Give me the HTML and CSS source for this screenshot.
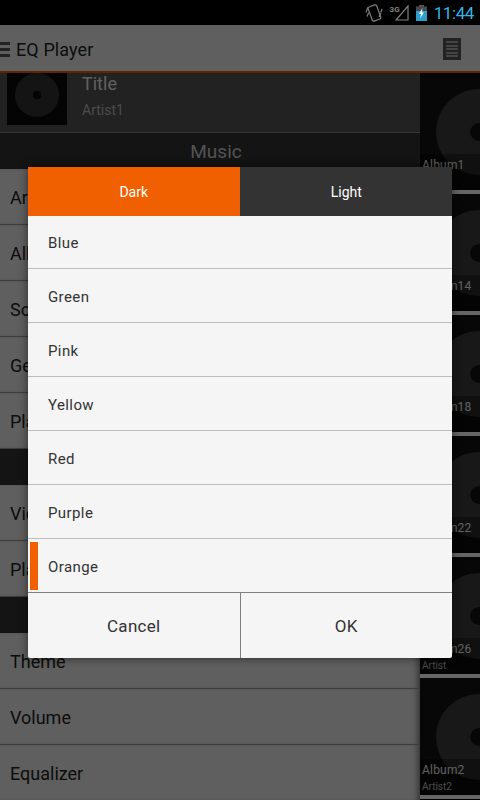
FILE: index.html
```html
<!DOCTYPE html>
<html lang="en">
<head>
    <meta charset="UTF-8" />
    <meta name="viewport" content="width=device-width, initial-scale=1.0"/>
    <title>EQ Player</title>
    <link rel="stylesheet" href="styles.css">
</head>
<body>

<div class="status-bar">
    <svg class="status-rotate" width="18" height="20" viewBox="0 0 18 20" fill="none" stroke="#808080" stroke-width="1.2">
        <rect x="5" y="2.5" width="9" height="15" rx="1.5" transform="rotate(-20 9.5 10)"/>
        <path d="M2.8 4.5 L1 9.5 M3.6 9.5 L2.2 13.5 M15.6 10 L14.2 14 M17 6 L15.8 9.5"/>
    </svg>
    <span class="status-net">
        <span class="status-3g">3G</span>
        <svg width="14" height="16" viewBox="0 0 14 16" fill="none" stroke="#808080" stroke-width="1.2"><path d="M13 1 V15 H1 Z"/></svg>
    </span>
    <svg width="11" height="16" viewBox="0 0 11 16">
        <rect x="3" y="0" width="5" height="2" fill="#555"/>
        <rect x="0" y="1.5" width="11" height="14.5" fill="#4a4a4a"/>
        <rect x="0" y="6" width="11" height="10" fill="#2b9fd0"/>
        <path d="M6.5 3 L3 9 H5.2 L4 13.5 L8 7.5 H5.8 Z" fill="#fff"/>
    </svg>
    <span class="status-time">11:44</span>
</div>

<div class="action-bar">
    <span class="drawer-icon"><i></i><i></i><i></i></span>
    <span class="app-title">EQ Player</span>
    <span class="queue-icon"><i></i><i></i><i></i><i></i><i></i></span>
</div>

<div class="main">
    <div class="menu">
        <div class="now-playing">
            <div class="thumb"><span class="disc"></span></div>
            <div class="track">
                <div class="track-title">Title</div>
                <div class="track-artist">Artist1</div>
            </div>
        </div>
        <div class="section">Music</div>
        <div class="menu-row">Artists</div>
        <div class="menu-row">Albums</div>
        <div class="menu-row">Songs</div>
        <div class="menu-row">Genres</div>
        <div class="menu-row">Playlists</div>
        <div class="section">Video</div>
        <div class="menu-row">Videos</div>
        <div class="menu-row">Playlists</div>
        <div class="section">Settings</div>
        <div class="menu-row">Theme</div>
        <div class="menu-row">Volume</div>
        <div class="menu-row">Equalizer</div>
    </div>

    <div class="albums">
        <div class="album"><span class="album-disc"></span><div class="album-label"><div class="album-name">Album1</div><div class="album-artist">Artist1</div></div></div>
        <div class="album"><span class="album-disc"></span><div class="album-label"><div class="album-name">Album14</div><div class="album-artist">Artist</div></div></div>
        <div class="album"><span class="album-disc"></span><div class="album-label"><div class="album-name">Album18</div><div class="album-artist">Artist</div></div></div>
        <div class="album"><span class="album-disc"></span><div class="album-label"><div class="album-name">Album22</div><div class="album-artist">Artist</div></div></div>
        <div class="album"><span class="album-disc"></span><div class="album-label"><div class="album-name">Album26</div><div class="album-artist">Artist</div></div></div>
        <div class="album"><span class="album-disc"></span><div class="album-label"><div class="album-name">Album2</div><div class="album-artist">Artist2</div></div></div>
    </div>
</div>

<!-- Theme picker, over the dimmed page -->
<div class="dim">
    <div class="dialog">
        <div class="tabs">
            <div class="tab tab-on">Dark</div>
            <div class="tab">Light</div>
        </div>
        <div class="colors">
            <div class="color-row">Blue</div>
            <div class="color-row">Green</div>
            <div class="color-row">Pink</div>
            <div class="color-row">Yellow</div>
            <div class="color-row">Red</div>
            <div class="color-row">Purple</div>
            <div class="color-row selected"><span class="marker"></span><span class="selected-name">Orange</span></div>
        </div>
        <div class="buttons">
            <div class="btn">Cancel</div>
            <div class="btn">OK</div>
        </div>
    </div>
</div>

</body>
</html>
```

FILE: styles.css
```css
* {
    box-sizing: border-box;
}
body {
    margin: 0;
    width: 480px;
    height: 800px;
    overflow: hidden;
    position: relative;
    background: #000;
    font-family: Roboto, "Liberation Sans", sans-serif;
}

/* status bar */
.status-bar {
    height: 25px;
    background: #000;
    display: flex;
    align-items: center;
    justify-content: flex-end;
    gap: 7px;
    padding-right: 6px;
}
.status-net {
    display: flex;
    align-items: flex-end;
}
.status-3g {
    font-size: 8px;
    font-weight: bold;
    color: #808080;
    align-self: flex-start;
    margin-right: -5px;
}
.status-time {
    font-size: 17px;
    color: #33b5e5;
    letter-spacing: -0.4px;
}

/* action bar */
.action-bar {
    height: 48px;
    background: #eee;
    border-bottom: 2px solid #f06000;
    display: flex;
    align-items: center;
    color: #222;
    padding-top: 2px;
}
.drawer-icon {
    width: 10px;
    display: flex;
    flex-direction: column;
    gap: 3px;
}
.drawer-icon i {
    height: 3px;
    background: #555;
}
.app-title {
    font-size: 18px;
    margin-left: 6px;
    letter-spacing: 0.1px;
    padding-top: 1px;
}
.queue-icon {
    margin-left: auto;
    margin-right: 19px;
    width: 18px;
    height: 22px;
    background: #555;
    padding: 3px;
    display: flex;
    flex-direction: column;
    justify-content: space-between;
}
.queue-icon i {
    height: 2px;
    background: #aaa;
}

/* left menu + album strip */
.main {
    display: flex;
    height: 727px;
    overflow: hidden;
}
.menu {
    width: 420px;
    flex-shrink: 0;
    background: #eee;
}
.now-playing {
    height: 60px;
    background: #555;
    border-bottom: 1px solid #888;
    display: flex;
    color: #eee;
    overflow: hidden;
}
.thumb {
    width: 60px;
    height: 60px;
    margin: -8px 0 0 7px;
    background: #0a0a0a;
    display: flex;
    align-items: center;
    justify-content: center;
}
.disc {
    width: 44px;
    height: 44px;
    border-radius: 50%;
    background: radial-gradient(circle, #0a0a0a 0 4px, #333 4.5px);
}
.track {
    margin-left: 15px;
}
.track-title {
    font-size: 18px;
}
.track-artist {
    font-size: 14px;
    margin-top: 8px;
    color: #bbb;
}
.section {
    height: 36px;
    background: #333;
    color: #ccc;
    font-size: 19px;
    display: flex;
    align-items: center;
    justify-content: center;
    padding-left: 12px;
}
.menu-row {
    height: 56px;
    border-bottom: 1px solid #999;
    box-shadow: inset -6px 0 6px -4px rgba(0, 0, 0, 0.5);
    display: flex;
    align-items: center;
    padding: 2px 0 0 10px;
    font-size: 18px;
    color: #222;
}

.albums {
    flex: 1;
}
.album {
    width: 117px;
    height: 121px;
    position: relative;
    background: #121212;
    border-bottom: 4px solid #fff;
    display: flex;
    align-items: center;
    justify-content: center;
}
.album-disc {
    width: 86px;
    height: 86px;
    border-radius: 50%;
    background: radial-gradient(circle, #121212 0 8.5px, #3c3c3c 9px);
}
.album-label {
    position: absolute;
    left: 0;
    right: 0;
    bottom: 0;
    height: 36px;
    padding: 4px 2px 0;
    background: rgba(0, 0, 0, 0.3);
}
.album-name {
    font-size: 12px;
    letter-spacing: 0.2px;
    color: #eee;
}
.album-artist {
    font-size: 10px;
    color: #bbb;
    margin-top: 4px;
}

/* dialog */
.dim {
    position: absolute;
    top: 25px;
    left: 0;
    right: 0;
    bottom: 0;
    background: rgba(0, 0, 0, 0.6);
    display: flex;
    align-items: center;
    justify-content: center;
}
.dialog {
    width: 424px;
    height: 491px;
    background: #f5f5f5;
    border-radius: 0 0 2px 2px;
    box-shadow: 0 0 10px rgba(0, 0, 0, 0.55);
    display: flex;
    flex-direction: column;
}
.tabs {
    height: 49px;
    display: flex;
    background: #333;
}
.tab {
    flex: 1;
    display: flex;
    align-items: center;
    justify-content: center;
    font-size: 14px;
    color: #fff;
}
.tab-on {
    background: #f06000;
    margin-right: 1px;
}
.color-row {
    height: 54px;
    border-bottom: 1px solid #bdbdbd;
    display: flex;
    align-items: center;
    padding: 2px 0 0 20px;
    font-size: 15px;
    letter-spacing: 0.4px;
    color: #333;
}
.color-row:first-child {
    height: 53px;
}
.color-row.selected {
    border-bottom: 1px solid #808080;
    padding: 0 0 0 2px;
}
.marker {
    width: 8px;
    height: 48px;
    margin-right: 10px;
    background: #f06000;
}
.selected-name {
    padding-top: 2px;
}
.buttons {
    flex: 1;
    display: flex;
}
.btn {
    flex: 1;
    display: flex;
    align-items: center;
    justify-content: center;
    padding-top: 1px;
    font-size: 17px;
    letter-spacing: 0.3px;
    color: #333;
}
.btn:first-child {
    border-right: 1px solid #808080;
}
```
